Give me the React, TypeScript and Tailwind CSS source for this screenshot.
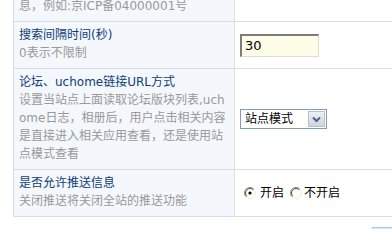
export default function App() {
  const font = { fontFamily: '"DejaVu Sans", "Noto Sans CJK SC", sans-serif' };
  return (
    <div className="w-[392px] h-[229px] overflow-hidden bg-white text-[12px] leading-[18px]" style={font}>
      <div className="-mt-[3px] ml-[13px] border-l border-[#d6dde6]">
        {/* row 1 (cut off) */}
        <div className="flex border-b border-[#d6dde6]">
          <div className="w-[221px] shrink-0 bg-[#f4f7fc] border-r border-[#dbe3ee] pl-[5px] pb-[6px] text-[#999] whitespace-nowrap">
            息，例如:京ICP备04000001号
          </div>
          <div className="flex-1" />
        </div>

        {/* row 2 */}
        <div className="flex border-b border-[#d6dde6]">
          <div className="w-[221px] shrink-0 bg-[#f4f7fc] border-r border-[#dbe3ee] pl-[5px] pt-[4px] pb-[6px]">
            <div className="text-[#0f3e78]">搜索间隔时间(秒)</div>
            <div className="text-[#999]">0表示不限制</div>
          </div>
          <div className="flex-1 flex items-center pl-[5px]">
            <div className="w-[79px] h-[23px] bg-[#fdfde8] border-t-2 border-l-2 border-t-[#7c7c7c] border-l-[#7c7c7c] border-b border-r border-b-[#dcdcd4] border-r-[#dcdcd4] flex items-center pl-[3px] text-[13px] text-black">
              30
            </div>
          </div>
        </div>

        {/* row 3 */}
        <div className="flex border-b border-[#d6dde6]">
          <div className="w-[221px] shrink-0 bg-[#f4f7fc] border-r border-[#dbe3ee] pl-[5px] pt-[4px] pb-[6px] whitespace-nowrap">
            <div className="text-[#0f3e78]">论坛、uchome链接URL方式</div>
            <div className="text-[#999]">
              设置当站点上面读取论坛版块列表,uch
              <br />
              ome日志，相册后，用户点击相关内容
              <br />
              是直接进入相关应用查看，还是使用站
              <br />
              点模式查看
            </div>
          </div>
          <div className="flex-1 flex items-center pl-[5px]">
            <div className="w-[87px] h-[20px] border border-[#7f9db9] bg-white flex items-center justify-between">
              <span className="pl-[4px] text-black">站点模式</span>
              <span className="w-[17px] h-[16px] mr-[1px] bg-gradient-to-b from-[#eef0f5] to-[#cfd4de] border border-[#b8bfcc] flex items-center justify-center">
                <svg width="9" height="7" viewBox="0 0 9 7">
                  <path d="M1 1.5 L4.5 5 L8 1.5" fill="none" stroke="#4d6185" strokeWidth="2" />
                </svg>
              </span>
            </div>
          </div>
        </div>

        {/* row 4 */}
        <div className="flex border-b border-[#d6dde6]">
          <div className="w-[221px] shrink-0 bg-[#f4f7fc] border-r border-[#dbe3ee] pl-[5px] pt-[4px] pb-[6px]">
            <div className="text-[#0f3e78]">是否允许推送信息</div>
            <div className="text-[#999]">关闭推送将关闭全站的推送功能</div>
          </div>
          <div className="flex-1 flex items-center pl-[9px] text-black">
            <Radio checked />
            <span className="ml-[4px]">开启</span>
            <span className="ml-[6px]"><Radio /></span>
            <span className="ml-[2px]">不开启</span>
          </div>
        </div>
      </div>
      <div className="ml-[372px] mt-[10px] w-[30px] h-[10px] bg-[#dbe8f8] border-t border-l border-[#a9c4e8]" />
    </div>
  );
}

function Radio({ checked }: { checked?: boolean }) {
  return (
    <svg width="12" height="12" viewBox="0 0 12 12" className="block">
      <circle cx="6" cy="6" r="5.5" fill="#fffff4" />
      <path d="M2.1 9.9 A5.5 5.5 0 0 1 9.9 2.1" fill="none" stroke="#8a8a8a" strokeWidth="1" />
      <path d="M2.8 9.2 A4.5 4.5 0 0 1 9.2 2.8" fill="none" stroke="#505050" strokeWidth="1" />
      <path d="M9.9 2.1 A5.5 5.5 0 0 1 2.1 9.9" fill="none" stroke="#ececec" strokeWidth="1" />
      {checked && <circle cx="6" cy="6" r="1.6" fill="#000" />}
    </svg>
  );
}
